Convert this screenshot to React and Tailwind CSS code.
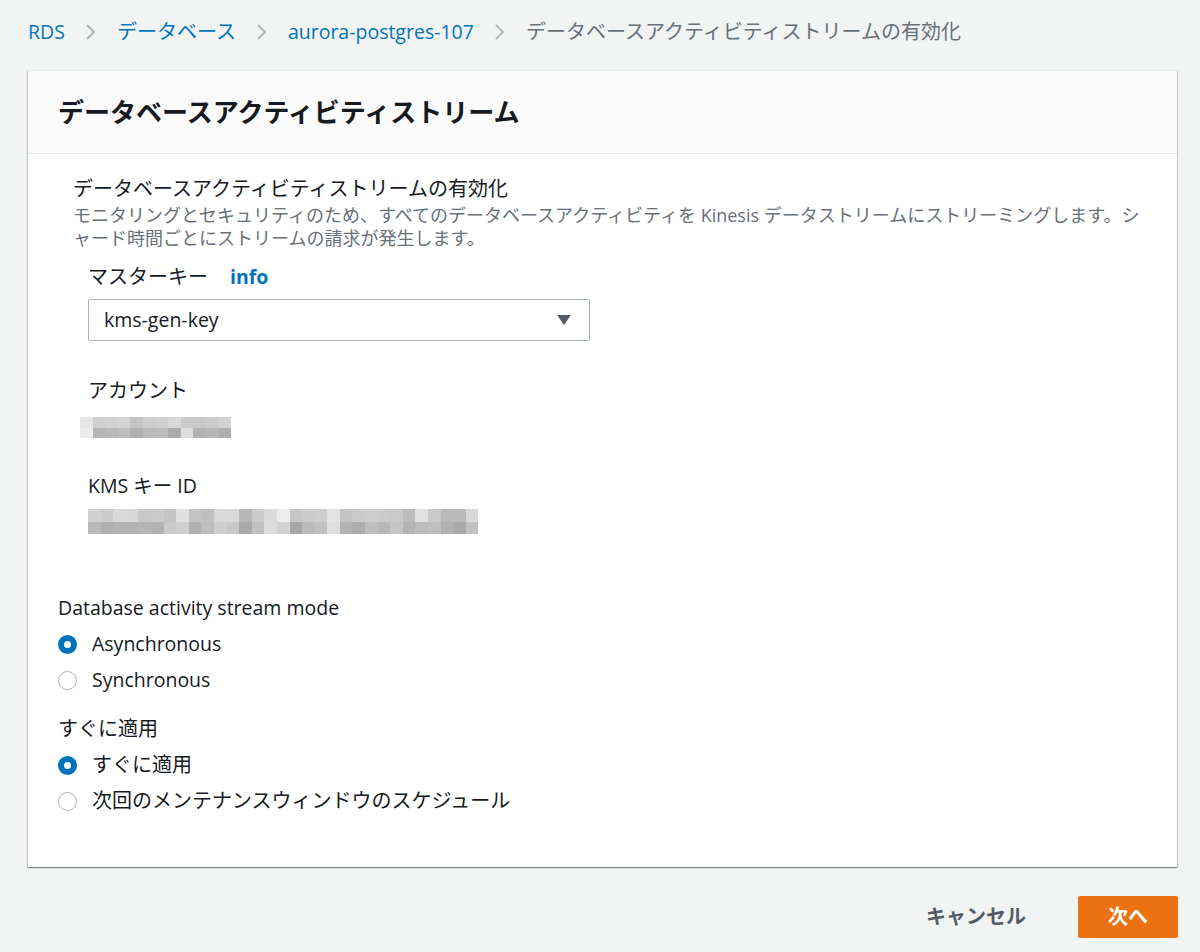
import { Fragment } from "react";

const font = "font-['Open_Sans','Noto_Sans_CJK_JP',sans-serif]";

// blurred (pixelated) values, two rows of grey cells
const accountCells = [
  ["bg-[#e6e6e6]", "bg-[#cfcfcf]", "bg-[#d2d2d2]", "bg-[#d4d4d4]", "bg-[#c4c4c4]", "bg-[#cdcdcd]", "bg-[#d0d0d0]", "bg-[#d8d8d8]", "bg-[#cacaca]", "bg-[#c9c9c9]", "bg-[#cbcbcb]", "bg-[#d2d2d2]"],
  ["bg-[#ececec]", "bg-[#b5b5b5]", "bg-[#b9b9b9]", "bg-[#bdbdbd]", "bg-[#b0b0b0]", "bg-[#bbbbbb]", "bg-[#bcbcbc]", "bg-[#ababab]", "bg-[#dddddd]", "bg-[#b3b3b3]", "bg-[#b6b6b6]", "bg-[#adadad]"],
];

const keyCells = [
  ["bg-[#d0d0d0]", "bg-[#cccccc]", "bg-[#d9d9d9]", "bg-[#d8d8d8]", "bg-[#c8c8c8]", "bg-[#cacaca]", "bg-[#c4c4c4]", "bg-[#e0e0e0]", "bg-[#c3c3c3]", "bg-[#bfbfbf]", "bg-[#d9d9d9]", "bg-[#dadada]", "bg-[#b7b7b7]", "bg-[#cbcbcb]", "bg-[#dbdbdb]", "bg-[#ececec]", "bg-[#c7c7c7]", "bg-[#cccccc]", "bg-[#cecece]", "bg-[#e3e3e3]", "bg-[#c3c3c3]", "bg-[#cacaca]", "bg-[#cdcdcd]", "bg-[#cbcbcb]", "bg-[#c9c9c9]", "bg-[#bdbdbd]", "bg-[#e1e1e1]", "bg-[#cacaca]", "bg-[#bababa]", "bg-[#bababa]", "bg-[#d9d9d9]"],
  ["bg-[#b9b9b9]", "bg-[#b0b0b0]", "bg-[#b3b3b3]", "bg-[#b2b2b2]", "bg-[#b5b5b5]", "bg-[#b1b1b1]", "bg-[#cacaca]", "bg-[#cfcfcf]", "bg-[#b0b0b0]", "bg-[#bdbdbd]", "bg-[#cecece]", "bg-[#c9c9c9]", "bg-[#a9a9a9]", "bg-[#c0c0c0]", "bg-[#dcdcdc]", "bg-[#d2d2d2]", "bg-[#a7a7a7]", "bg-[#bbbbbb]", "bg-[#c0c0c0]", "bg-[#dedede]", "bg-[#b3b3b3]", "bg-[#adadad]", "bg-[#bebebe]", "bg-[#b8b8b8]", "bg-[#c5c5c5]", "bg-[#b4b4b4]", "bg-[#bcbcbc]", "bg-[#bfbfbf]", "bg-[#b1b1b1]", "bg-[#a9a9a9]", "bg-[#c1c1c1]"],
];

function Pixelated({ rows, cell }) {
  return (
    <div className="flex flex-col">
      {rows.map((row, r) => (
        <div key={r} className="flex">
          {row.map((c, i) => (
            <div key={i} className={`${cell} w-[12.6px] ${c}`} />
          ))}
        </div>
      ))}
    </div>
  );
}

function Radio({ checked, label, ja }) {
  return (
    <label className="flex h-[36px] items-center gap-[15px]">
      {checked ? (
        <span className="box-border h-[19px] w-[19px] rounded-full border-[6px] border-[#0073bb] bg-white" />
      ) : (
        <span className="box-border h-[19px] w-[19px] rounded-full border-[1.5px] border-[#aab7b8] bg-white" />
      )}
      <span className={`${ja ? "text-[20px]" : "text-[19.5px]"} text-[#16191f]`}>{label}</span>
    </label>
  );
}

function Chevron() {
  return (
    <svg width="14" height="18" viewBox="0 0 14 18" className="mx-[19px]">
      <path d="M3 2l7 7-7 7" fill="none" stroke="#aab7b8" strokeWidth="2" />
    </svg>
  );
}

export default function App() {
  const crumbs = [
    { label: "RDS", cls: "text-[19.5px]" },
    { label: "データベース", cls: "text-[20px]" },
    { label: "aurora-postgres-107", cls: "text-[19.5px]" },
  ];

  return (
    <div className={`min-h-[952px] bg-[#f2f3f3] px-[28px] ${font}`}>
      {/* Breadcrumb */}
      <nav className="flex h-[64px] items-center">
        {crumbs.map((c) => (
          <Fragment key={c.label}>
            <a className={`${c.cls} text-[#0073bb]`}>{c.label}</a>
            <Chevron />
          </Fragment>
        ))}
        <span className="text-[20px] text-[#687078]">データベースアクティビティストリームの有効化</span>
      </nav>

      {/* Card */}
      <div className="mt-[6px] w-[1149px] border-t border-[#eaeded] bg-white shadow-[0_1px_1px_0_rgba(0,28,36,0.3),1px_1px_1px_0_rgba(0,28,36,0.15),-1px_1px_1px_0_rgba(0,28,36,0.15)]">
        <div className="flex h-[83px] items-center border-b border-[#eaeded] bg-[#fafafa] px-[30px]">
          <h1 className="text-[26px] font-bold text-[#16191f]">データベースアクティビティストリーム</h1>
        </div>

        <div className="px-[30px] pb-[48px] pt-[21px]">
          <div className="pl-[15px]">
            <div className="text-[20px] leading-[28px] text-[#16191f]">データベースアクティビティストリームの有効化</div>
            <p className="mt-[1px] text-[18px] leading-[23px] text-[#687078] [line-break:loose]">
              モニタリングとセキュリティのため、すべてのデータベースアクティビティを Kinesis データストリームにストリーミングします。シャード時間ごとにストリームの請求が発生します。
            </p>

            <div className="pl-[15px]">
              <div className="mt-[13px] flex items-center gap-[22px] leading-[28px]">
                <span className="text-[20px] text-[#16191f]">マスターキー</span>
                <span className="text-[19.5px] font-bold text-[#0073bb]">info</span>
              </div>
              <div className="mt-[8px] flex h-[42px] w-[502px] items-center justify-between rounded-[2px] border border-[#aab7b8] pl-[15px] pr-[18px]">
                <span className="text-[19.5px] text-[#16191f]">kms-gen-key</span>
                <svg width="14" height="10" viewBox="0 0 14 10">
                  <path d="M0 0h14L7 10z" fill="#545b64" />
                </svg>
              </div>

              <div className="mt-[36px] text-[20px] leading-[28px] text-[#16191f]">アカウント</div>
              <div className="-ml-[8px] mt-[12px]">
                <Pixelated rows={accountCells} cell="h-[10.5px]" />
              </div>

              <div className="mt-[34px] text-[19.5px] leading-[28px] text-[#16191f]">KMS キー ID</div>
              <div className="mt-[9px]">
                <Pixelated rows={keyCells} cell="h-[12.5px]" />
              </div>
            </div>
          </div>

          <div className="mt-[60px] text-[19.5px] leading-[28px] text-[#16191f]">Database activity stream mode</div>
          <div className="mt-[4px]">
            <Radio checked label="Asynchronous" />
            <Radio label="Synchronous" />
          </div>

          <div className="mt-[17px] text-[20px] leading-[28px] text-[#16191f]">すぐに適用</div>
          <div className="mt-[4px]">
            <Radio checked ja label="すぐに適用" />
            <Radio ja label="次回のメンテナンスウィンドウのスケジュール" />
          </div>
        </div>
      </div>

      {/* Actions */}
      <div className="mt-[29px] flex w-[1150px] items-center justify-end gap-[52px]">
        <button className="text-[20px] font-bold text-[#545b64]">キャンセル</button>
        <button className="h-[42px] w-[100px] rounded-[2px] bg-[#ec7211] text-[20px] font-bold text-white">次へ</button>
      </div>
    </div>
  );
}
